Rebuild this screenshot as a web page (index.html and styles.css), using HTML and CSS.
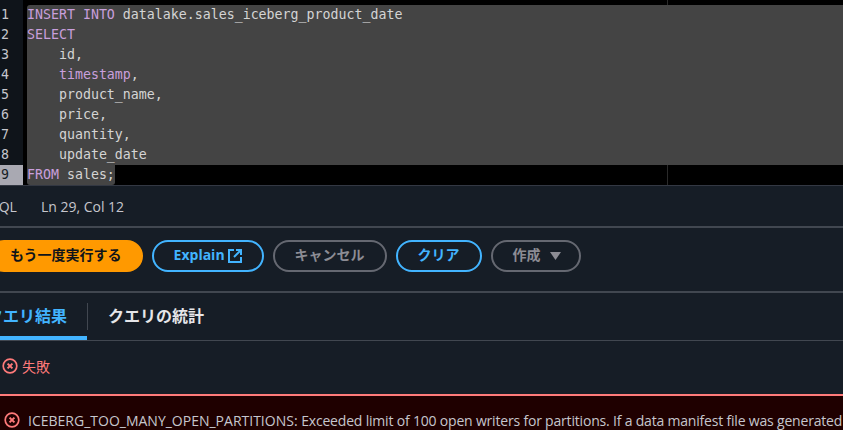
FILE: index.html
```html
<!DOCTYPE html>
<html lang="ja">
<head>
<meta charset="utf-8">
<title>Query editor</title>
<link rel="stylesheet" href="styles.css">
</head>
<body>
<div class="page">
  <section class="editor">
    <div class="ruler"></div>
    <div class="line"><span class="num">1</span><div class="code sel first"><span class="kw">INSERT INTO</span> datalake.sales_iceberg_product_date</div></div>
    <div class="line"><span class="num">2</span><div class="code sel"><span class="kw">SELECT</span></div></div>
    <div class="line"><span class="num">3</span><div class="code sel">    id,</div></div>
    <div class="line"><span class="num">4</span><div class="code sel">    <span class="kw">timestamp</span>,</div></div>
    <div class="line"><span class="num">5</span><div class="code sel">    product_name,</div></div>
    <div class="line"><span class="num">6</span><div class="code sel">    price,</div></div>
    <div class="line"><span class="num">7</span><div class="code sel">    quantity,</div></div>
    <div class="line"><span class="num">8</span><div class="code sel">    update_date</div></div>
    <div class="line active"><span class="num">9</span><div class="code"><span class="sel-end"><span class="kw">FROM</span> sales;</span></div></div>
  </section>
  <div class="status"><span>SQL</span><span>Ln 29, Col 12</span></div>
  <div class="actions">
    <button class="btn primary">もう一度実行する</button>
    <button class="btn blue explain">Explain
      <svg class="ext" width="14" height="14" viewBox="0 0 14 14" fill="none" stroke="currentColor" stroke-width="2"><path d="M6 1H1v12h12V8"/><path d="M8 1h5v5M13 1L6 8"/></svg>
    </button>
    <button class="btn muted">キャンセル</button>
    <button class="btn blue">クリア</button>
    <button class="btn muted create">作成<svg class="caret" width="11" height="8" viewBox="0 0 11 8"><path d="M0 0h11L5.5 8z" fill="currentColor"/></svg></button>
  </div>
  <div class="tabs">
    <div class="tab current">クエリ結果</div>
    <div class="tab next">クエリの統計</div>
  </div>
  <div class="result">
    <svg class="x" width="16" height="16" viewBox="0 0 16 16"><circle cx="8" cy="8" r="6.8" fill="none" stroke="currentColor" stroke-width="1.7"/><path d="M5.6 5.6l4.8 4.8M10.4 5.6l-4.8 4.8" stroke="currentColor" stroke-width="2"/></svg>
    <span>失敗</span>
  </div>
  <div class="error">
    <svg class="x" width="16" height="16" viewBox="0 0 16 16"><circle cx="8" cy="8" r="6.8" fill="none" stroke="currentColor" stroke-width="1.7"/><path d="M5.6 5.6l4.8 4.8M10.4 5.6l-4.8 4.8" stroke="currentColor" stroke-width="2"/></svg>
    <span class="msg">ICEBERG_TOO_MANY_OPEN_PARTITIONS: <span class="tail">Exceeded limit of 100 open writers for partitions. If a data manifest file was generated</span></span>
  </div>
</div>
</body>
</html>
```
FILE: styles.css
```css
* { box-sizing: border-box; }
html, body { margin: 0; height: 100%; overflow: hidden; background: #161d26; }
.page {
  width: 1000px;
  margin-left: -20px;
  font-family: "Open Sans", "Noto Sans CJK JP", sans-serif;
  font-size: 14px;
  color: #c6c6cd;
}
.editor {
  position: relative;
  height: 186px;
  padding-top: 5px;
  background: linear-gradient(to right, #0f141a 43px, #000 43px);
  border-bottom: 1px solid #333843;
}
.ruler { position: absolute; top: 0; bottom: 0; left: 687px; width: 1px; background: #2a2a2a; }
.line { position: relative; display: flex; height: 20px; }
.num {
  width: 43px;
  flex: none;
  margin-right: 4px;
  padding-left: 21px;
  font: 13.28px/20px "DejaVu Sans Mono", monospace;
  color: #c6c6cd;
}
.active .num { background: #a9a9b2; color: #161d26; }
.code {
  flex: 1;
  font: 13.28px/20px "DejaVu Sans Mono", monospace;
  color: #d4d4d4;
  white-space: pre;
}
.sel { background: #444; }
.first { border-top-left-radius: 3px; }
.sel-end { display: inline-block; background: #444; border-radius: 0 0 3px 3px; }
.kw { color: #c99fdc; }
.status {
  display: flex;
  gap: 24px;
  height: 40px;
  align-items: center;
  padding-left: 11px;
}
.actions {
  display: flex;
  gap: 9px;
  align-items: flex-start;
  height: 67px;
  padding: 12px 0 0 8px;
  border-top: 2px solid #414750;
  border-bottom: 2px solid #414750;
}
.btn {
  display: inline-flex;
  align-items: center;
  gap: 6px;
  height: 32px;
  padding: 0 20px 2px;
  border: 2px solid #656871;
  border-radius: 16px;
  background: transparent;
  color: #8c8c94;
  font: 700 14px/18px "Open Sans", "Noto Sans CJK JP", sans-serif;
}
.primary { background: #ff9900; border-color: #ff9900; color: #0f141a; padding-right: 19px; }
.blue { border-color: #42b4ff; color: #42b4ff; }
.explain { gap: 3px; }
.create { padding-right: 18px; gap: 4px; }
.caret { margin: 2px 0 0 5px; }
.ext { margin-top: 2px; }
.tabs {
  display: flex;
  height: 48px;
  border-bottom: 1px solid #414750;
}
.tab {
  position: relative;
  display: flex;
  align-items: center;
  font-weight: 700;
  font-size: 16px;
  color: #e6e6e9;
  white-space: nowrap;
  padding-bottom: 3px;
}
.tab.current {
  justify-content: flex-end;
  width: 107px;
  height: 47px;
  padding: 0 20px 0 0;
  color: #42b4ff;
  border-bottom: 4px solid #42b4ff;
}
.tab.next { padding-left: 21px; }
.tab.next::before {
  content: "";
  position: absolute;
  left: 0;
  top: 10px;
  height: 27px;
  width: 1px;
  background: #414750;
}
.result {
  display: flex;
  align-items: center;
  gap: 4px;
  height: 53px;
  padding: 0 0 3px 22px;
  color: #ff7a7a;
}
.error {
  display: flex;
  align-items: flex-start;
  gap: 8px;
  height: 36px;
  padding: 15px 0 0 24px;
  background: #1f0000;
  border-top: 2px solid #ff7a7a;
  white-space: nowrap;
}
.error .x { color: #ff7a7a; flex: none; margin-top: 1px; }
.msg { color: #c6c6cd; }
.tail { letter-spacing: -0.19px; }
```
